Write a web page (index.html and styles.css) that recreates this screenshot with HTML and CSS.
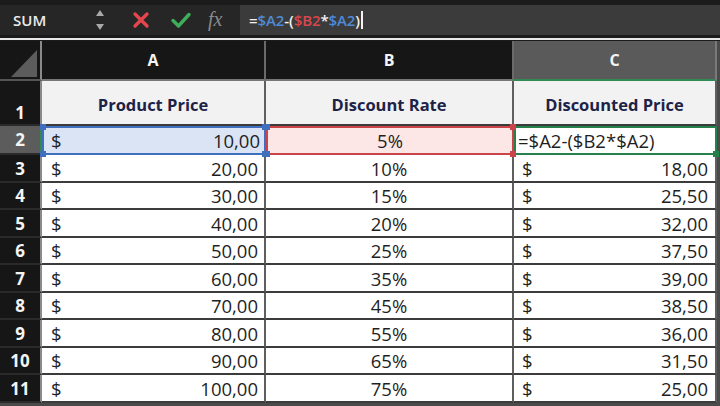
FILE: index.html
```html
<!DOCTYPE html>
<html>
<head>
<meta charset="utf-8">
<link rel="stylesheet" href="styles.css">
</head>
<body>
<div class="app">
  <div class="fbar">
    <div class="tools">
      <div class="namebox">SUM</div>
      <svg class="spin" width="12" height="26" viewBox="0 0 12 26"><path d="M2 9 L6 3 L10 9 Z" fill="#a9a9a9"/><path d="M2 17 L6 23 L10 17 Z" fill="#a9a9a9"/></svg>
      <svg class="xbtn" width="18" height="18" viewBox="0 0 18 18"><path d="M3 3 L15 15 M15 3 L3 15" stroke="#e2474d" stroke-width="3.4" stroke-linecap="round"/></svg>
      <svg class="okbtn" width="22" height="18" viewBox="0 0 22 18"><path d="M3 9.5 L8.5 15 L19 3.5" stroke="#3fae5a" stroke-width="3.4" fill="none" stroke-linecap="round" stroke-linejoin="round"/></svg>
      <div class="fx">fx</div>
    </div>
    <div class="formula"><span class="w">=</span><span class="ra">$A2</span><span class="w">-(</span><span class="rb">$B2</span><span class="w">*</span><span class="ra">$A2</span><span class="w">)</span><span class="caret"></span></div>
  </div>
  <div class="sep"></div>
  <div class="sheet">
    <div class="corner"><svg width="28" height="30" viewBox="0 0 28 30"><path d="M1 29 L27 29 L27 2 Z" fill="#5c5c5c"/></svg></div>
    <div class="ch">A</div>
    <div class="ch">B</div>
    <div class="ch ch-sel">C</div>

    <div class="rh rh1">1</div>
    <div class="c hdr">Product Price</div>
    <div class="c hdr">Discount Rate</div>
    <div class="c hdr">Discounted Price</div>

    <div class="rh rh-sel">2</div>
    <div class="c money sel-a"><span>$</span><span>10,00</span><i class="h tl hb"></i><i class="h tr hb"></i><i class="h bl hb"></i><i class="h br hb"></i></div>
    <div class="c pct sel-b">5%<i class="h tl hb"></i><i class="h tr hr"></i><i class="h bl hb"></i><i class="h br hr"></i></div>
    <div class="c formula-cell sel-c">=$A2-($B2*$A2)<i class="h br hg"></i></div>

    <div class="rh">3</div><div class="c money"><span>$</span><span>20,00</span></div><div class="c pct">10%</div><div class="c money mc"><span>$</span><span>18,00</span></div>
    <div class="rh">4</div><div class="c money"><span>$</span><span>30,00</span></div><div class="c pct">15%</div><div class="c money mc"><span>$</span><span>25,50</span></div>
    <div class="rh">5</div><div class="c money"><span>$</span><span>40,00</span></div><div class="c pct">20%</div><div class="c money mc"><span>$</span><span>32,00</span></div>
    <div class="rh">6</div><div class="c money"><span>$</span><span>50,00</span></div><div class="c pct">25%</div><div class="c money mc"><span>$</span><span>37,50</span></div>
    <div class="rh">7</div><div class="c money"><span>$</span><span>60,00</span></div><div class="c pct">35%</div><div class="c money mc"><span>$</span><span>39,00</span></div>
    <div class="rh">8</div><div class="c money"><span>$</span><span>70,00</span></div><div class="c pct">45%</div><div class="c money mc"><span>$</span><span>38,50</span></div>
    <div class="rh">9</div><div class="c money"><span>$</span><span>80,00</span></div><div class="c pct">55%</div><div class="c money mc"><span>$</span><span>36,00</span></div>
    <div class="rh">10</div><div class="c money"><span>$</span><span>90,00</span></div><div class="c pct">65%</div><div class="c money mc"><span>$</span><span>31,50</span></div>
    <div class="rh">11</div><div class="c money"><span>$</span><span>100,00</span></div><div class="c pct">75%</div><div class="c money mc"><span>$</span><span>25,00</span></div>
  </div>
</div>
</body>
</html>
```

FILE: styles.css
```css
* { box-sizing: border-box; }
html, body { margin: 0; padding: 0; }
body {
  width: 720px;
  height: 406px;
  overflow: hidden;
  background: #4a4a4a;
  font-family: "Open Sans", "Liberation Sans", sans-serif;
}
.app { width: 720px; background: #4a4a4a; }

.fbar {
  height: 38px;
  display: flex;
  background: #262626;
  border-top: 5px solid #1b1b1b;
  border-bottom: 3px solid #1b1b1b;
}
.tools {
  width: 240px;
  display: flex;
  align-items: center;
}
.namebox {
  color: #ececec;
  font-size: 15px;
  font-weight: 600;
  padding-left: 13px;
  width: 94px;
}
.xbtn { margin-left: 26px; }
.okbtn { margin-left: 20px; }
.fx {
  margin-left: 16px;
  font-family: "Liberation Serif", "DejaVu Serif", serif;
  font-style: italic;
  font-size: 20px;
  color: #8a8a8a;
  line-height: 1;
  padding-bottom: 3px;
}
.formula {
  flex: 1;
  background: #3b3b3b;
  display: flex;
  align-items: center;
  padding-left: 9px;
  font-size: 15px;
  font-weight: 600;
  letter-spacing: -0.1px;
}
.formula .w { color: #f2f2f2; }
.formula .ra { color: #4d8ad8; }
.formula .rb { color: #d8474c; }
.caret {
  display: inline-block;
  width: 2px;
  height: 18px;
  background: #f2f2f2;
  margin-left: 1px;
}
.sep {
  height: 3px;
  background: #e8e8e8;
  border-bottom: 1px solid #1b1b1b;
}

.sheet {
  display: grid;
  grid-template-columns: 42px 224px 248px 203px;
  grid-template-rows: 40px 45px 29px 28px 27px 28px 27px 28px 27px 28px 27px 28px;
  background: #1b1b1b;
  width: 717px;
  position: relative;
}

.corner {
  background: #161616;
  border-right: 2px solid #8a8a8a;
  border-bottom: 2px solid #555;
  display: flex;
  align-items: flex-end;
  justify-content: flex-end;
  padding: 0 2px 1px 0;
}
.ch {
  background: #161616;
  color: #f4f4f4;
  font-weight: 700;
  font-size: 16px;
  display: flex;
  align-items: center;
  justify-content: center;
  border-right: 2px solid #6a6a6a;
  border-bottom: 2px solid #777;
}
.ch-sel {
  background: #5a5a5a;
  border-bottom: 2px solid #2f8a56;
  border-right: 2px solid #7a7a7a;
}
.rh {
  background: #161616;
  color: #f4f4f4;
  font-weight: 700;
  font-size: 17px;
  display: flex;
  align-items: center;
  justify-content: center;
  border-right: 2px solid #8a8a8a;
  border-bottom: 2px solid #2a2a2a;
}
.rh1 { align-items: flex-end; padding-bottom: 0; }
.rh-sel {
  background: #5c5c5c;
  border-right: 2px solid #2f8a56;
}

.c {
  background: #fff;
  color: #1f1f1f;
  font-size: 18.5px;
  display: flex;
  align-items: center;
  border-right: 2px solid #5f5f5f;
  border-bottom: 2px solid #3c3c3c;
  position: relative;
  white-space: nowrap;
}
.hdr {
  background: #f2f2f2;
  color: #1c2347;
  font-weight: 700;
  font-size: 16.5px;
  justify-content: center;
  padding-top: 3px;
}
.money {
  justify-content: space-between;
  padding: 0 6px 0 9px;
}
.mc { padding: 0 7px 0 8px; }
.pct { justify-content: center; }
.formula-cell { padding-left: 2px; }

.sel-a {
  background: #dae4f4;
  border: 2px solid #3f6fbd;
  padding: 0 4px 0 7px;
}
.sel-b {
  background: #fde6e6;
  border: 2px solid #cb444a;
}
.sel-c {
  border: 2px solid #25804b;
}
.h {
  position: absolute;
  width: 6px;
  height: 6px;
  z-index: 3;
}
.hb { background: #3f6fbd; }
.hr { background: #cb444a; }
.hg { background: #25804b; }
.tl { left: -4px; top: -4px; }
.tr { right: -4px; top: -4px; }
.bl { left: -4px; bottom: -4px; }
.br { right: -4px; bottom: -4px; }
```
